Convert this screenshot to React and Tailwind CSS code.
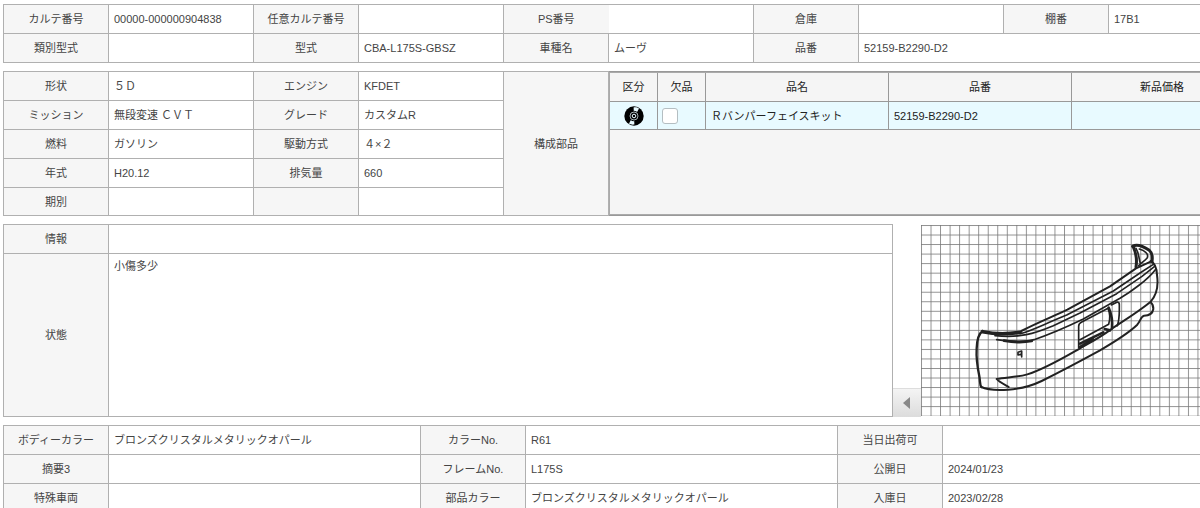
import { useState } from 'react';

const labelClass = 'border border-[#b0b0b0] bg-[#f6f6f6] px-1 text-center font-normal';
const valueClass = 'border border-[#b0b0b0] bg-white px-[5px] text-left';
const gridHead = 'border-r border-b border-[#999] text-center font-normal';
const gridCell = 'border-r border-b border-[#999] px-[5px]';

const Label = ({ children, className = '', ...props }) => (
  <th scope="row" className={`${labelClass} ${className}`} {...props}>
    {children}
  </th>
);

const Value = ({ children, className = '', ...props }) => (
  <td className={`${valueClass} ${className}`} {...props}>
    {children}
  </td>
);

const specs = [
  ['形状', '５Ｄ', 'エンジン', 'KFDET'],
  ['ミッション', '無段変速 ＣＶＴ', 'グレード', 'カスタムR'],
  ['燃料', 'ガソリン', '駆動方式', '４×２'],
  ['年式', 'H20.12', '排気量', '660'],
  ['期別', '', '', ''],
];

const colors = [
  ['ボディーカラー', 'ブロンズクリスタルメタリックオパール', 'カラーNo.', 'R61', '当日出荷可', ''],
  ['摘要3', '', 'フレームNo.', 'L175S', '公開日', '2024/01/23'],
  ['特殊車両', '', '部品カラー', 'ブロンズクリスタルメタリックオパール', '入庫日', '2023/02/28'],
];

const DiscIcon = () => (
  <svg viewBox="0 0 20 20" className="mx-auto h-5 w-5" aria-hidden="true">
    <circle cx="10" cy="10" r="9.7" fill="#000" />
    <path d="M10 9 9.6 1.4C11.4 1 13.6 1.4 15 2.4L12 8zM10 11 10.4 18.6C8.6 19 6.4 18.6 5 17.6L8 12z" fill="#e9faff" />
    <circle cx="10" cy="10" r="5.2" fill="#000" />
    <circle cx="10" cy="10" r="4" fill="none" stroke="#e9faff" strokeWidth="0.7" />
    <circle cx="10" cy="10" r="1.8" fill="none" stroke="#e9faff" strokeWidth="1" />
  </svg>
);

// Bumper sketch on graph paper
const BumperSketch = () => (
  <svg viewBox="123 30 999 573" className="block h-[191px] w-[333px] self-center" role="img" aria-label="Rバンパー">
    <defs>
      <pattern id="graph" x="123" y="30" width="28.6" height="28.6" patternUnits="userSpaceOnUse">
        <path d="M0 1.5H28.6M1.5 0V28.6" stroke="#777" strokeWidth="2.4" fill="none" />
      </pattern>
    </defs>
    <rect x="123" y="30" width="999" height="573" fill="#fff" />
    <rect x="123" y="30" width="999" height="573" fill="url(#graph)" />
    <g fill="none" stroke="#222" strokeWidth="5" strokeLinecap="round" strokeLinejoin="round">
      <path d="M308 348C296 356 291 374 290 400C288 434 293 460 298 484C301 500 299 510 304 516" strokeWidth="7" />
      <path d="M304 516C320 524 350 526 384 524C430 521 458 511 485 498C545 468 605 436 660 406C708 378 748 352 771 330C782 318 782 304 792 302C808 302 818 294 820 282C820 272 817 266 812 262" strokeWidth="6" />
      <path d="M812 138C824 144 830 156 831 180C836 214 830 240 812 260C778 288 736 314 693 343C662 366 632 382 600 400C544 432 494 462 442 478C410 488 376 486 350 492C356 500 372 508 386 516" strokeWidth="6" />
      <path d="M308 350C344 358 388 357 420 352" strokeWidth="11" />
      <path d="M424 348C470 324 520 304 562 284L690 214L768 160L812 140" strokeWidth="6" />
      <path d="M420 356C450 350 486 330 560 300L700 228L780 174L820 148" />
      <path d="M345 362C420 370 462 356 520 332L600 294L710 236L786 184L824 154" />
      <path d="M350 374C400 380 436 382 462 374C516 356 560 336 610 312L720 250C750 232 804 194 826 164" />
      <path d="M372 377C400 382 425 384 455 378" strokeWidth="8" />
      <path d="M758 94C774 84 796 98 808 106C818 114 818 126 816 140" strokeWidth="9" />
      <path d="M760 96C768 114 772 132 768 156" strokeWidth="9" />
      <path d="M768 100C780 120 776 142 784 152M778 102C796 108 806 116 802 128C794 138 782 144 776 152" />
      <path d="M596 398V334Q596 326 604 322L684 280M684 280C692 298 690 314 686 328L600 374M694 270L712 261Q719 262 718 270V284C718 304 716 320 712 332" />
      <path d="M686 278C694 296 698 316 696 340" strokeWidth="8" />
      <path d="M600 386L670 352M600 396L640 374M674 342L690 346" strokeWidth="8" />
      <path d="M414 412L425 408V426M414 412V420L422 418" strokeWidth="5" />
    </g>
  </svg>
);

export default function App() {
  const [missing, setMissing] = useState(false);

  return (
    <main className="overflow-hidden bg-white pt-1 pl-[3px] font-['Liberation_Sans','Noto_Sans_CJK_JP',sans-serif] text-[11px] leading-4 text-[#444]">
      <div className="flex min-w-[1251px] flex-col gap-2">
        <table className="w-full table-fixed border-collapse">
          <colgroup>
            <col className="w-[105px]" />
            <col className="w-[145px]" />
            <col className="w-[105px]" />
            <col className="w-[145px]" />
            <col className="w-[105px]" />
            <col className="w-[145px]" />
            <col className="w-[105px]" />
            <col className="w-[145px]" />
            <col className="w-[105px]" />
            <col />
          </colgroup>
          <tbody>
            <tr className="h-[29px]">
              <Label>カルテ番号</Label>
              <Value>00000-000000904838</Value>
              <Label>任意カルテ番号</Label>
              <Value />
              <Label className="border-r-0">PS番号</Label>
              <Value className="border-l-0" />
              <Label>倉庫</Label>
              <Value />
              <Label>棚番</Label>
              <Value>17B1</Value>
            </tr>
            <tr className="h-[29px]">
              <Label>類別型式</Label>
              <Value />
              <Label>型式</Label>
              <Value>CBA-L175S-GBSZ</Value>
              <Label>車種名</Label>
              <Value>ムーヴ</Value>
              <Label>品番</Label>
              <Value colSpan={3}>52159-B2290-D2</Value>
            </tr>
          </tbody>
        </table>

        <table className="w-full table-fixed border-collapse">
          <colgroup>
            <col className="w-[105px]" />
            <col className="w-[145px]" />
            <col className="w-[105px]" />
            <col className="w-[145px]" />
            <col className="w-[105px]" />
            <col />
          </colgroup>
          <tbody>
            {specs.map((row, i) => (
              <tr key={row[0]} className={i === specs.length - 1 ? 'h-7' : 'h-[29px]'}>
                <Label>{row[0]}</Label>
                <Value>{row[1]}</Value>
                <Label>{row[2]}</Label>
                <Value>{row[3]}</Value>
                {i === 0 && (
                  <>
                    <Label rowSpan={5}>構成部品</Label>
                    <td rowSpan={5} className="border border-[#999] p-0 align-top">
                      <div className="h-[143px] border border-r-0 border-[#aaa] bg-[#f5f5f5] text-[#222]">
                        <table className="w-full table-fixed border-separate border-spacing-0">
                          <colgroup>
                            <col className="w-12" />
                            <col className="w-12" />
                            <col className="w-[183px]" />
                            <col className="w-[183px]" />
                            <col />
                          </colgroup>
                          <thead>
                            <tr className="h-[29px]">
                              <th className={gridHead}>区分</th>
                              <th className={gridHead}>欠品</th>
                              <th className={gridHead}>品名</th>
                              <th className={gridHead}>品番</th>
                              <th className={gridHead}>新品価格</th>
                            </tr>
                          </thead>
                          <tbody>
                            <tr className="h-7 bg-[#e8faff]">
                              <td className="border-r border-b border-[#999]">
                                <DiscIcon />
                              </td>
                              <td className="border-r border-b border-[#999] px-1">
                                <input
                                  type="checkbox"
                                  aria-label="欠品"
                                  checked={missing}
                                  onChange={(e) => setMissing(e.target.checked)}
                                  className="block h-4 w-4 appearance-none rounded-[3px] border border-[#b4bec2] bg-white checked:bg-[#3b82c4]"
                                />
                              </td>
                              <td className={gridCell}>Ｒバンパーフェイスキット</td>
                              <td className={gridCell}>52159-B2290-D2</td>
                              <td className={gridCell} />
                            </tr>
                          </tbody>
                        </table>
                      </div>
                    </td>
                  </>
                )}
              </tr>
            ))}
          </tbody>
        </table>

        <div className="flex">
          <table className="flex-1 table-fixed border-collapse">
            <colgroup>
              <col className="w-[105px]" />
              <col />
            </colgroup>
            <tbody>
              <tr className="h-[29px]">
                <Label>情報</Label>
                <Value />
              </tr>
              <tr className="h-[163px]">
                <Label>状態</Label>
                <Value className="pt-1 align-top">小傷多少</Value>
              </tr>
            </tbody>
          </table>
          <button
            type="button"
            aria-label="前へ"
            className="flex h-[29px] w-7 items-center justify-center self-end border-t border-[#ddd] bg-linear-to-b from-[#f4f4f4] to-[#dcdcdc]"
          >
            <svg viewBox="0 0 8 12" className="h-3 w-2" aria-hidden="true">
              <path d="M7 0V12L0 6z" fill="#888" />
            </svg>
          </button>
          <BumperSketch />
        </div>

        <table className="w-full table-fixed border-collapse">
          <colgroup>
            <col className="w-[105px]" />
            <col className="w-[312px]" />
            <col className="w-[105px]" />
            <col className="w-[312px]" />
            <col className="w-[105px]" />
            <col />
          </colgroup>
          <tbody>
            {colors.map((row) => (
              <tr key={row[0]} className="h-[29px]">
                <Label>{row[0]}</Label>
                <Value>{row[1]}</Value>
                <Label>{row[2]}</Label>
                <Value>{row[3]}</Value>
                <Label>{row[4]}</Label>
                <Value>{row[5]}</Value>
              </tr>
            ))}
          </tbody>
        </table>
      </div>
    </main>
  );
}
